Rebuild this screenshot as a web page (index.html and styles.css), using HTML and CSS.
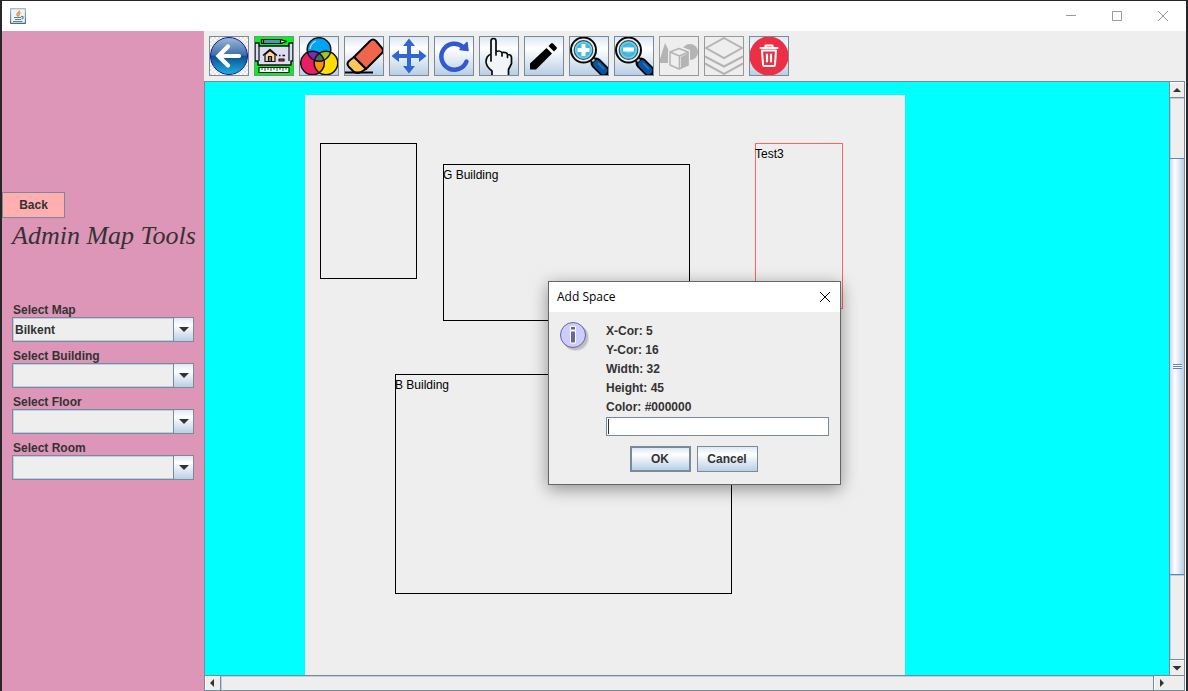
FILE: index.html
```html
<!DOCTYPE html>
<html lang="en">
<head>
<meta charset="utf-8">
<title>Admin Map Tools</title>
<link rel="stylesheet" href="styles.css">
</head>
<body>
<div class="window">
  <header class="titlebar">
    <svg class="java-icon" viewBox="0 0 16 16" aria-hidden="true">
      <defs><linearGradient id="jv" x1="0" y1="0" x2="0" y2="1"><stop offset="0" stop-color="#a9bccb"/><stop offset="1" stop-color="#3f6e8c"/></linearGradient></defs>
      <rect x=".5" y=".5" width="15" height="15" rx="1" fill="#f1f3f5" stroke="url(#jv)" stroke-width="1.300"/>
      <path d="M9.500 2.500C9.500 4.500 6.500 5 7 7l1 1.500M10.500 4.500C8 6 9.500 7 8.500 8.500" fill="none" stroke="#e8852a" stroke-width="1.300"/>
      <path d="M4 9.500h7M5 11.500h6M3 13.500h9.500M11 8.500c3-.5 2.500 2 .5 2.500" fill="none" stroke="#57809c" stroke-width="1.200"/>
    </svg>
    <div class="window-controls">
      <button class="caption-button" aria-label="Minimize"><svg viewBox="0 0 11 11"><path d="M0 4.500h10"/></svg></button>
      <button class="caption-button" aria-label="Maximize"><svg viewBox="0 0 11 11"><path d="M.5.5h9v9h-9z"/></svg></button>
      <button class="caption-button" aria-label="Close"><svg viewBox="0 0 11 11"><path d="M0 0l10 10M10 0L0 10"/></svg></button>
    </div>
  </header>

  <div class="content">
    <aside class="sidebar">
      <button class="back-button">Back</button>
      <h1 class="heading">Admin Map Tools</h1>
      <form class="filters">
        <div class="field"><label for="map">Select Map</label><div class="combo"><select id="map"><option>Bilkent</option></select></div></div>
        <div class="field"><label for="building">Select Building</label><div class="combo"><select id="building"><option></option></select></div></div>
        <div class="field"><label for="floor">Select Floor</label><div class="combo"><select id="floor"><option></option></select></div></div>
        <div class="field"><label for="room">Select Room</label><div class="combo"><select id="room"><option></option></select></div></div>
      </form>
    </aside>

    <main class="workspace">
      <nav class="toolbar" aria-label="Map tools">
        <button class="tool" aria-label="Go back">
          <svg viewBox="0 0 38 38">
            <defs>
              <pattern id="checks" width="4" height="4" patternUnits="userSpaceOnUse"><rect width="4" height="4" fill="#fff"/><path d="M0 0h2v2H0zM2 2h2v2H2z" fill="#e3e3e3"/></pattern>
              <linearGradient id="orb" x1="0" y1="0" x2="0" y2="1"><stop offset="0" stop-color="#9db9d8"/><stop offset=".48" stop-color="#3d6da6"/><stop offset=".5" stop-color="#0d4f90"/><stop offset="1" stop-color="#20b0de"/></linearGradient>
            </defs>
            <rect width="38" height="38" fill="url(#checks)"/>
            <circle cx="19" cy="19" r="18.500" fill="url(#orb)" stroke="#1616a0"/>
            <path d="M29 19H10M18 9.500L8.500 19l9.500 9.500" fill="none" stroke="#fff" stroke-width="4.200" stroke-linecap="round"/>
          </svg>
        </button>
        <button class="tool" aria-label="Blueprint">
          <svg viewBox="0 0 38 38">
            <rect width="38" height="38" fill="#00f51a"/>
            <g stroke="#111" stroke-width="1.200" stroke-linejoin="round">
              <path d="M0 6h4v3h30V6h4v18h-2v4H3v-4H0z" fill="#dcdcf2" stroke-width="1.500"/>
              <path d="M4 9v15M34 9v15" fill="none"/>
              <path d="M6.500 2.500h19l6 2-6 2h-19z" fill="#4b96bd"/><path d="M25.500 2.500l6 2-6 2z" fill="#f4d6a5"/><path d="M6.500 2.500h2v4h-2z" fill="#ef6c62"/>
              <path d="M10 17.500v7h10v-7l-5-4z" fill="#fbd7a0"/><path d="M8 18.500l7-6 7 6" fill="none" stroke-width="1.600"/><path d="M13.500 19.500h3v5h-3z" fill="#987b66"/>
              <path d="M24 22h5v2h-5z" fill="#e33"/><path d="M24 18.500h1.500M27.500 18.500H30" stroke-width="1.500"/>
              <path d="M4 30.500h30v5H4z" fill="#fff"/><path d="M7 31v2M10 31v3M13 31v2M16 31v3M19 31v2M22 31v3M25 31v2M28 31v3M31 31v2" stroke-width=".8"/>
            </g>
          </svg>
        </button>
        <button class="tool" aria-label="Colors">
          <svg viewBox="0 0 38 38">
            <defs><clipPath id="cb"><circle cx="19" cy="12.500" r="11.800"/></clipPath><clipPath id="cm"><circle cx="12.500" cy="26" r="11.800"/></clipPath></defs>
            <circle cx="19" cy="12.500" r="11.800" fill="#00a4f4"/><circle cx="12.500" cy="26" r="11.800" fill="#e91e63"/><circle cx="26" cy="26" r="11.800" fill="#ffdd00"/>
            <circle cx="12.500" cy="26" r="11.800" fill="#8427b0" clip-path="url(#cb)"/>
            <circle cx="26" cy="26" r="11.800" fill="#9ccc15" clip-path="url(#cb)"/>
            <g clip-path="url(#cm)"><circle cx="26" cy="26" r="11.800" fill="#ff9100"/><g clip-path="url(#cb)"><circle cx="26" cy="26" r="11.800" fill="#536570"/></g></g>
            <g fill="none" stroke="#111" stroke-width="1.500"><circle cx="19" cy="12.500" r="11.800"/><circle cx="12.500" cy="26" r="11.800"/><circle cx="26" cy="26" r="11.800"/></g>
            <path d="M10 12q1-6 6-8" fill="none" stroke="#fff" stroke-opacity=".65" stroke-width="1.300"/>
          </svg>
        </button>
        <button class="tool" aria-label="Eraser">
          <svg viewBox="0 0 38 38">
            <g stroke="#050505" stroke-width="2" stroke-linejoin="round">
              <path d="M9 20L25 4q3-3 6 0l6 7q2 3 0 5L21 32z" fill="#f0664c"/>
              <path d="M9 20l-5 4q-3 3 0 6l5 5q4 2 7 0l5-3z" fill="#ffc65c"/>
            </g>
            <path d="M0 35.500h28" stroke="#050505" stroke-width="2"/>
          </svg>
        </button>
        <button class="tool" aria-label="Move">
          <svg viewBox="0 0 38 38"><path d="M19 1.500l6 7.500h-4v8h8v-4l7.500 6-7.500 6v-4h-8v8h4l-6 7.500-6-7.500h4v-8H9v4L1.500 19 9 13v4h8V9h-4z" fill="#3066d0"/></svg>
        </button>
        <button class="tool" aria-label="Rotate">
          <svg viewBox="0 0 38 38"><path d="M31.500 24.500A13 13 0 1 1 28 10" fill="none" stroke="#3259cf" stroke-width="4.500" stroke-linecap="round"/><path d="M32 5.500L33 13.500 25 12.500z" fill="#3259cf" stroke="#3259cf" stroke-width="1.500" stroke-linejoin="round"/></svg>
        </button>
        <button class="tool" aria-label="Select">
          <svg viewBox="0 0 38 38"><path d="M12 38v-4Q6 29 5.500 24q0-5 5.500-7V4q0-2.500 2.500-2.500T16 4v11q5-2 6 1 5-1 5 2 5-1 5 2v6l-3 7v5z" fill="#f1f5fa"/><path d="M12 38v-4Q6.500 30 6 25q0-6 5-8v7V4q0-2.500 2.500-2.500T16 4v14-3.500q5-1.500 6 1.500v3-3.500q5-.5 5.500 2v3-3q4 0 4 3v6l-3 6v5.500" fill="none" stroke="#080808" stroke-width="1.700" stroke-linejoin="round"/></svg>
        </button>
        <button class="tool" aria-label="Draw">
          <svg viewBox="0 0 38 38"><path d="M5 32.500v-6L21.500 11l5.500 5.500-16 16zM23.500 9L26 6.500q1-1 2 0l3.500 3.500q1 1 0 2L29 14.500z"/></svg>
        </button>
        <button class="tool" aria-label="Zoom in">
          <svg viewBox="0 0 38 38">
            <defs><radialGradient id="lens"><stop offset="0" stop-color="#77d4ee"/><stop offset=".65" stop-color="#38b4dc"/><stop offset="1" stop-color="#a9e3f0"/></radialGradient></defs>
            <path d="M26 26l8 8" stroke="#050505" stroke-width="11" stroke-linecap="round"/><path d="M27 27l6.500 6.500" stroke="#0755a1" stroke-width="7.500" stroke-linecap="round"/><path d="M28 26l6 6" stroke="#2c7cc2" stroke-width="1.500"/><path d="M21 21l3.500 3.500" stroke="#111" stroke-width="6"/><path d="M20 20l4 4" stroke="#ccc" stroke-width="3"/>
            <circle cx="13.500" cy="13" r="12.500" fill="#eee" stroke="#080808" stroke-width="2"/><circle cx="13.500" cy="13" r="9.300" fill="url(#lens)" stroke="#245460" stroke-width="1.200"/>
            <path d="M13.500 7v12M7.500 13h12" stroke="#fff" stroke-width="4"/>
          </svg>
        </button>
        <button class="tool" aria-label="Zoom out">
          <svg viewBox="0 0 38 38">
            <path d="M26 26l8 8" stroke="#050505" stroke-width="11" stroke-linecap="round"/><path d="M27 27l6.500 6.500" stroke="#0755a1" stroke-width="7.500" stroke-linecap="round"/><path d="M28 26l6 6" stroke="#2c7cc2" stroke-width="1.500"/><path d="M21 21l3.500 3.500" stroke="#111" stroke-width="6"/><path d="M20 20l4 4" stroke="#ccc" stroke-width="3"/>
            <circle cx="13.500" cy="13" r="12.500" fill="#eee" stroke="#080808" stroke-width="2"/><circle cx="13.500" cy="13" r="9.300" fill="url(#lens)" stroke="#245460" stroke-width="1.200"/>
            <path d="M8 12.500h11" stroke="#fff" stroke-width="4"/>
          </svg>
        </button>
        <button class="tool" aria-label="Shapes" disabled>
          <svg viewBox="0 0 38 38"><path d="M5 6L0 22v4h10l3-4z" fill="#b4b4b4"/><circle cx="30" cy="15" r="8" fill="#b4b4b4"/><path d="M19 9l11 4v15l-11 6-11-5V13.500z" fill="#eee"/><path d="M19 11.500l9 3.500v13l-9 4-9-4V15z" fill="#eee" stroke="#b4b4b4" stroke-width="1.500" stroke-linejoin="round"/><path d="M21 20l7.500-4v11.500L21 31z" fill="#b4b4b4"/><path d="M10 15l9.500 4V32M19.500 19l9-4" fill="none" stroke="#b4b4b4" stroke-width="1.600"/></svg>
        </button>
        <button class="tool" aria-label="Layers" disabled>
          <svg viewBox="0 0 38 38"><path d="M19 1L37 11 19 21 1 11zM0 19.500L19 29.500l19-10M0 26.500L19 37l19-10.500" fill="none" stroke="#b4b4b4" stroke-width="2"/></svg>
        </button>
        <button class="tool" aria-label="Delete">
          <svg viewBox="0 0 38 38"><circle cx="19" cy="19" r="19.500" fill="#ec2f45"/><g fill="none" stroke="#fff" stroke-width="2" stroke-linejoin="round" stroke-linecap="round"><path d="M10.500 11h17M15.500 10.500V8.500h7v2M12 13.500l1 14q0 1.500 1.500 1.500h9q1.500 0 1.500-1.500l1-14z"/><path d="M17 17.500v7M21 17.500v7" stroke-width="2.200"/></g></svg>
        </button>
      </nav>

      <div class="scroll-pane">
        <div class="viewport">
          <div class="map-sheet">
            <div class="space space-blank"></div>
            <div class="space space-g">G Building</div>
            <div class="space space-b">B Building</div>
            <div class="space space-test">Test3</div>
          </div>
        </div>
        <div class="scrollbar vertical">
          <button class="scroll-arrow up" aria-label="Scroll up"><svg viewBox="0 0 8 8"><path d="M4 2l4 4H0z"/></svg></button>
          <div class="track"><div class="thumb"><span class="grip"></span></div></div>
          <button class="scroll-arrow down" aria-label="Scroll down"><svg viewBox="0 0 8 8"><path d="M-.5 2h9L4 6.500z"/></svg></button>
        </div>
        <div class="scrollbar horizontal">
          <button class="scroll-arrow left" aria-label="Scroll left"><svg viewBox="0 0 8 8"><path d="M5 0v8L1 4z"/></svg></button>
          <div class="track"></div>
          <button class="scroll-arrow right" aria-label="Scroll right"><svg viewBox="0 0 8 8"><path d="M2 0v8l4-4z"/></svg></button>
        </div>
        <div class="corner"></div>
      </div>
    </main>
  </div>

  <section class="dialog" role="dialog" aria-labelledby="dialog-title">
    <header class="dialog-title">
      <h2 id="dialog-title">Add Space</h2>
      <button class="dialog-close" aria-label="Close dialog"><svg viewBox="0 0 11 11"><path d="M0 0l10 10M10 0L0 10"/></svg></button>
    </header>
    <form class="dialog-body">
      <div class="message">
        <svg class="info-icon" viewBox="0 0 32 32" aria-hidden="true">
          <circle cx="15" cy="15" r="13" fill="#999" opacity=".45"/><circle cx="16" cy="16" r="13" fill="#aaa" opacity=".3"/>
          <circle cx="13" cy="13" r="12.500" fill="#ccccff" stroke="#666699"/>
          <path d="M10.500 4.500h5V8h-5zM10.500 9h5v12h-5z" fill="#666699" stroke="#fff"/>
        </svg>
        <div class="details">
          <label for="space-name">X-Cor: 5<br>Y-Cor: 16<br>Width: 32<br>Height: 45<br>Color: #000000</label>
          <input class="name-input" id="space-name" type="text">
        </div>
      </div>
      <div class="actions">
        <button class="push default" type="button">OK</button>
        <button class="push" type="button">Cancel</button>
      </div>
    </form>
  </section>
</div>
</body>
</html>
```
FILE: styles.css
```css
* { box-sizing: border-box; }

body {
  margin: 0;
  font: bold 12px/15px "Liberation Sans", Arial, sans-serif;
  color: #333;
}

button, input, select {
  font: inherit;
  color: inherit;
  margin: 0;
  padding: 0;
  border-radius: 0;
}

svg { display: block; }

.window {
  position: relative;
  display: flex;
  flex-direction: column;
  height: 100vh;
  border: solid #262628;
  border-width: 1px 2px 0;
  background: #eee;
  overflow: hidden;
}

.titlebar {
  display: flex;
  justify-content: space-between;
  align-items: center;
  height: 30px;
  flex: none;
  padding-left: 8px;
  background: #fff;
}

.java-icon { width: 16px; height: 16px; }

.window-controls { display: flex; height: 100%; }

.caption-button {
  display: grid;
  place-items: center;
  width: 46px;
  border: 0;
  background: none;
}

.caption-button svg, .dialog-close svg {
  width: 11px;
  height: 11px;
  fill: none;
  stroke: #999;
  overflow: visible;
}

.content { display: flex; flex: 1; min-height: 0; }

.sidebar {
  width: 202px;
  flex: none;
  padding-top: 161px;
  background: #dd96b8;
}

.back-button {
  display: block;
  width: 63px;
  height: 26px;
  border: 1px solid #7a8a99;
  background: #ffafaf;
}

.heading {
  margin: 0;
  padding-left: 10px;
  font: italic 26px/36px "Liberation Serif", "Times New Roman", serif;
  white-space: nowrap;
}

.filters {
  display: grid;
  gap: 6px;
  padding: 48px 10px 0;
}

.field label {
  display: block;
  padding: 2px 0 0 1px;
  line-height: 13px;
}

.combo {
  position: relative;
  height: 25px;
  border: 1px solid #7a8a99;
}

.combo select {
  appearance: none;
  display: block;
  width: 100%;
  height: 100%;
  border: 0;
  padding: 1px 20px 0 2px;
  background: #eee;
  box-shadow: inset 0 0 0 1px #b8cfe5;
}

.combo::before, .combo::after {
  content: "";
  position: absolute;
  pointer-events: none;
}

.combo::before {
  top: 0;
  right: 0;
  bottom: 0;
  width: 19px;
  border-left: 1px solid #7a8a99;
  background: linear-gradient(#dde8f3, #fff 30%, #b8cfe5);
}

.combo::after {
  top: 9px;
  right: 4px;
  border: solid transparent;
  border-width: 5px 5px 0;
  border-top-color: #333;
}

.workspace {
  display: flex;
  flex-direction: column;
  flex: 1;
  min-width: 0;
}

.toolbar {
  display: flex;
  gap: 5px;
  padding: 5px;
}

.tool {
  width: 40px;
  height: 40px;
  border: 1px solid #7a8a99;
  background: linear-gradient(#dde8f3, #fff 30%, #b8cfe5);
}

.tool svg { width: 38px; height: 38px; }

.tool:disabled { border-color: #999; background: #eee; }

.scroll-pane {
  display: grid;
  grid-template-columns: 1fr 16px;
  grid-template-rows: 1fr 16px;
  flex: 1;
  min-height: 0;
  margin-right: 1px;
  border: solid #7a8a99;
  border-width: 1px 0 0 1px;
  box-shadow: 1px 0 #fff;
}

.viewport {
  display: flex;
  min-height: 0;
  padding: 13px 0 0 100px;
  background: #0ff;
  overflow: hidden;
}

.map-sheet {
  position: relative;
  width: 600px;
  flex: none;
  background: #eee;
}

.space {
  position: absolute;
  padding-top: 3px;
  border: 1px solid #000;
  color: #000;
  font-weight: normal;
  text-indent: -1px;
}

.space-blank { left: 15px; top: 48px; width: 97px; height: 136px; }
.space-g { left: 138px; top: 69px; width: 247px; height: 157px; }
.space-b { left: 90px; top: 279px; width: 337px; height: 220px; }
.space-test { left: 450px; top: 48px; width: 88px; height: 166px; border-color: #ff6464; }

.scrollbar {
  display: flex;
  min-height: 0;
  border: 1px solid #7a8a99;
}

.vertical { flex-direction: column; border-width: 0 1px; }
.horizontal { border-width: 1px 0; }

.scroll-arrow {
  display: grid;
  place-items: center;
  flex: none;
  width: 16px;
  height: 16px;
  border: 0 solid #7a8a99;
  background: #eee;
  box-shadow: inset 1px 1px #fff;
}

.vertical .scroll-arrow { width: 14px; }
.horizontal .scroll-arrow { height: 14px; }
.scroll-arrow svg { width: 8px; height: 8px; fill: #333; overflow: visible; }
.up { border-bottom-width: 1px; }
.down { border-top-width: 1px; }
.left { border-right-width: 1px; }
.right { border-left-width: 1px; }

.track { flex: 1; box-shadow: inset 1px 1px #b8cfe5; }
.vertical .track { padding-top: 60px; }

.thumb {
  display: grid;
  place-items: center;
  height: 417px;
  border: solid #6382bf;
  border-width: 1px 0;
  background: linear-gradient(90deg, #c8d9ea, #fff 35%, #b8cfe5);
  box-shadow: 0 1px #b8cfe5;
}

.grip {
  width: 9px;
  height: 5px;
  background: repeating-linear-gradient(#6382bf 0 1px, #fff 1px 2px);
}

.corner {
  border: solid #7a8a99;
  border-width: 1px 1px 1px 0;
}

.dialog {
  position: absolute;
  left: 546px;
  top: 280px;
  width: 293px;
  border: 1px solid #666;
  background: #eee;
  box-shadow: 0 4px 16px rgba(0, 0, 0, .4);
}

.dialog-title {
  display: flex;
  justify-content: space-between;
  align-items: center;
  height: 30px;
  padding: 0 9px 0 8px;
  background: #fff;
}

.dialog-title h2 {
  margin: 0;
  color: #000;
  font: 12px/16px "Open Sans", "Segoe UI", sans-serif;
}

.dialog-close { border: 0; background: none; }
.dialog-close svg { stroke: #000; }

.dialog-body { padding: 10px 11px 12px; }

.message { display: flex; gap: 14px; }

.info-icon { width: 32px; height: 32px; flex: none; }

.details {
  flex: 1;
  min-width: 0;
}

.details label { display: block; line-height: 19px; }

.name-input {
  display: block;
  width: 100%;
  height: 19px;
  padding: 0 2px;
  border: 1px solid #7a8a99;
  background: linear-gradient(#333, #333) 1px 1px / 1px 15px no-repeat #fff;
}

.actions {
  display: flex;
  justify-content: center;
  gap: 6px;
  padding: 10px 2px 0 0;
}

.push {
  width: 61px;
  height: 26px;
  border: 1px solid #7a8a99;
  background: linear-gradient(#dde8f3, #fff 30%, #b8cfe5);
}

.default { border-width: 2px; }
```
